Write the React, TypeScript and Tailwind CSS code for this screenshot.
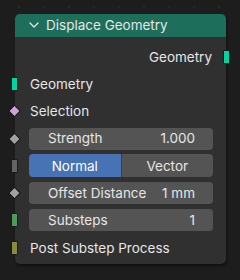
import React from "react";

const font = { fontFamily: "Inter, 'Noto Sans', sans-serif" };

function SocketRect({ color, side }: { color: string; side: "left" | "right" }) {
  return (
    <span
      className={`absolute top-1/2 h-[14px] w-[7px] -translate-y-1/2 rounded-[1px] border border-[#1a1a1a] ${
        side === "left" ? "left-[-4px]" : "right-[-4px]"
      }`}
      style={{ backgroundColor: color }}
    />
  );
}

function SocketDiamond({ color }: { color: string }) {
  return (
    <span
      className="absolute left-[-5px] top-1/2 h-[9px] w-[9px] -translate-y-1/2 rotate-45 rounded-[1px] border border-[#1a1a1a]"
      style={{ backgroundColor: color }}
    />
  );
}

function Row({ children }: { children: React.ReactNode }) {
  return <div className="relative flex h-[27.3px] items-center">{children}</div>;
}

function Field({ label, value }: { label: string; value: string }) {
  return (
    <div className="ml-[14px] mr-[13px] flex h-[22px] flex-1 items-center justify-between rounded-[4px] bg-[#545454] pl-[19px] pr-[18px] text-[#e6e6e6]">
      <span>{label}</span>
      <span>{value}</span>
    </div>
  );
}

export default function App() {
  return (
    <div
      className="h-[280px] w-[240px] bg-[#1d1d1d] bg-[radial-gradient(circle,#2b2b2b_0.8px,transparent_1.3px)] bg-[length:25px_25px] bg-[position:6.5px_-5.5px] pl-[15px] pt-[14px] text-[13.5px] text-[#e6e6e6]"
      style={font}
    >
      <div className="w-[211px] rounded-[5px] bg-[#303030] shadow-[1px_2px_3px_rgba(0,0,0,0.45)]">
        {/* header */}
        <div className="flex h-[23px] items-center gap-[7px] rounded-t-[5px] bg-[#1d6e5b] pl-[14px] text-[#e6e6e6]">
          <svg width="10" height="10" viewBox="0 0 10 10" fill="none" className="mt-[-1px]">
            <path d="M1 3 L5 7 L9 3" stroke="#e6e6e6" strokeWidth="1.3" strokeLinecap="round" strokeLinejoin="round" />
          </svg>
          <span>Displace Geometry</span>
        </div>

        <div className="pb-[2.5px] pt-[6px]">
          <Row>
            <span className="ml-auto mr-[14px]">Geometry</span>
            <SocketRect color="#00d6a3" side="right" />
          </Row>
          <Row>
            <SocketRect color="#00d6a3" side="left" />
            <span className="ml-[15px]">Geometry</span>
          </Row>
          <Row>
            <SocketDiamond color="#cfa1dc" />
            <span className="ml-[15px]">Selection</span>
          </Row>
          <Row>
            <SocketDiamond color="#a1a1a1" />
            <Field label="Strength" value="1.000" />
          </Row>
          <Row>
            <SocketRect color="#636363" side="left" />
            <div className="ml-[14px] mr-[13px] flex h-[23px] flex-1 overflow-hidden rounded-[4px]">
              <div className="flex flex-1 items-center justify-center bg-[#4772b3] text-white">Normal</div>
              <div className="flex flex-1 items-center justify-center border-l border-[#3d3d3d] bg-[#545454]">Vector</div>
            </div>
          </Row>
          <Row>
            <SocketDiamond color="#a1a1a1" />
            <Field label="Offset Distance" value="1 mm" />
          </Row>
          <Row>
            <SocketRect color="#4c9a5c" side="left" />
            <Field label="Substeps" value="1" />
          </Row>
          <Row>
            <SocketRect color="#8a8a3c" side="left" />
            <span className="ml-[15px]">Post Substep Process</span>
          </Row>
        </div>
      </div>
    </div>
  );
}
